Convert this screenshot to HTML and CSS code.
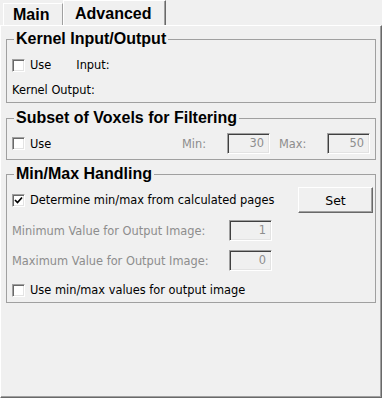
FILE: index.html
```html
<!DOCTYPE html>
<html>
<head>
<meta charset="utf-8">
<link rel="stylesheet" href="styles.css">
</head>
<body>
<div class="tabs">
  <div class="tab">Main</div>
  <div class="tab active">Advanced</div>
</div>
<div class="panel">
  <fieldset class="group g1">
    <legend>Kernel Input/Output</legend>
    <div class="row r1">
      <span class="check"><span class="box"></span><span class="cap">Use</span></span>
      <span class="input-label">Input:</span>
    </div>
    <div class="row r2"><span>Kernel Output:</span></div>
  </fieldset>

  <fieldset class="group g2">
    <legend>Subset of Voxels for Filtering</legend>
    <div class="row r3">
      <span class="check"><span class="box"></span><span class="cap">Use</span></span>
      <span class="minmax">
        <span class="dis lbl-min">Min:</span>
        <span class="field">30</span>
        <span class="dis lbl-max">Max:</span>
        <span class="field">50</span>
      </span>
    </div>
  </fieldset>

  <fieldset class="group g3">
    <legend>Min/Max Handling</legend>
    <div class="row r4">
      <span class="check"><span class="box"><svg width="9" height="9" viewBox="0 0 9 9"><polyline points="1,4 3.5,6.5 8,1.5" fill="none" stroke="#000" stroke-width="1.7"/></svg></span><span class="cap">Determine min/max from calculated pages</span></span>
      <span class="button">Set</span>
    </div>
    <div class="row r5">
      <span class="dis val-label">Minimum Value for Output Image:</span>
      <span class="field">1</span>
    </div>
    <div class="row r6">
      <span class="dis val-label">Maximum Value for Output Image:</span>
      <span class="field">0</span>
    </div>
    <div class="row r7">
      <span class="check"><span class="box"></span><span class="cap">Use min/max values for output image</span></span>
    </div>
  </fieldset>
</div>
</body>
</html>
```

FILE: styles.css
```css
html, body {
  margin: 0;
  padding: 0;
}
body {
  width: 382px;
  height: 398px;
  background: #f0f0f0;
  font-family: "DejaVu Sans", sans-serif;
  font-size: 11.4px;
  color: #000;
  overflow: hidden;
}

.tabs {
  display: flex;
  align-items: flex-end;
  height: 25px;
  padding-left: 3px;
  box-sizing: border-box;
}
.tab {
  box-sizing: border-box;
  height: 22px;
  width: 60px;
  border-top: 1px solid #fff;
  border-left: 1px solid #fff;
  border-right: 1px solid #a0a0a0;
  font-family: "Liberation Sans", Arial, sans-serif;
  font-weight: bold;
  font-size: 16px;
  line-height: 18px;
  padding-top: 2px;
  padding-left: 9px;
}
.tab.active {
  height: 25px;
  width: 103px;
  border-right: 1px solid #696969;
  box-shadow: inset -1px 0 0 #a0a0a0;
  padding-top: 4px;
  padding-left: 11px;
}

.panel {
  box-sizing: border-box;
  height: 373px;
  border-top: 1px solid #fff;
  border-left: 1px solid #fff;
  border-right: 1px solid #696969;
  border-bottom: 1px solid #696969;
  box-shadow: inset -1px -1px 0 #a0a0a0;
  padding: 5px 5px 0 5px;
}

.group {
  margin: 0;
  padding: 0 5px;
  min-inline-size: 0;
  border: 1px solid #a0a0a0;
}
.group legend {
  font-family: "Liberation Sans", Arial, sans-serif;
  font-weight: bold;
  font-size: 16px;
  line-height: 16px;
  padding: 0 2px;
  margin-left: 2px;
}
.g1 { padding-bottom: 2px; }
.g2 { margin-top: 7px; padding-bottom: 5px; }
.g3 { margin-top: 6px; padding-bottom: 2px; }

.row {
  display: flex;
  align-items: center;
}
.r1 { height: 20px; margin-top: 8px; }
.r2 { height: 20px; margin-top: 5px; }
.r3 { height: 21px; margin-top: 7px; }
.r4 { height: 26px; margin-top: 5px; }
.r5 { height: 21px; margin-top: 7px; }
.r6 { height: 21px; margin-top: 9px; }
.r7 { height: 20px; margin-top: 9px; }

.check {
  display: flex;
  align-items: center;
}
.box {
  box-sizing: border-box;
  width: 13px;
  height: 13px;
  background: #fff;
  border: 1px solid;
  border-color: #a0a0a0 #fff #fff #a0a0a0;
  box-shadow: inset 1px 1px 0 #696969, inset -1px -1px 0 #e3e3e3;
  display: flex;
  align-items: center;
  justify-content: center;
}
.box svg { display: block; }
.cap { margin-left: 5px; }

.input-label { margin-left: 25px; }

.dis { color: #8d8d8d; }

.minmax {
  margin-left: auto;
  display: flex;
  align-items: center;
}
.lbl-min { width: 45px; }
.lbl-max { width: 48px; margin-left: 9px; }

.field {
  box-sizing: border-box;
  width: 43px;
  height: 21px;
  border: 1px solid;
  border-color: #a0a0a0 #fff #fff #a0a0a0;
  box-shadow: inset 1px 1px 0 #404040, inset -1px -1px 0 #e3e3e3;
  color: #8d8d8d;
  text-align: right;
  padding-right: 5px;
  line-height: 19px;
}

.button {
  box-sizing: border-box;
  margin-left: auto;
  margin-right: -3px;
  width: 75px;
  height: 26px;
  border: 1px solid;
  border-color: #fff #696969 #696969 #fff;
  box-shadow: inset -1px -1px 0 #a0a0a0;
  display: flex;
  align-items: center;
  justify-content: center;
  font-size: 12.5px;
}

.val-label { width: 217px; }
```
